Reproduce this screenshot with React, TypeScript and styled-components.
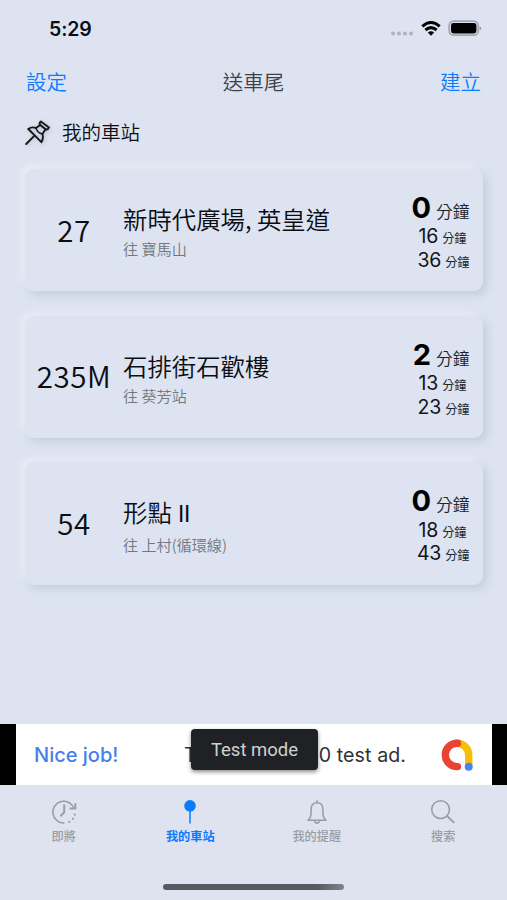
import React from 'react';
import styled, { createGlobalStyle } from 'styled-components';

const cjk = '"Noto Sans CJK TC", sans-serif';

const GlobalStyle = createGlobalStyle`
  * { box-sizing: border-box; }
  body { margin: 0; background: #dde3f0; }
`;

const Screen = styled.div`
  width: 507px;
  height: 900px;
  overflow: hidden;
  display: flex;
  flex-direction: column;
  background: #dde3f0;
  color: #0a0d14;
  font-family: Inter, ${cjk};
`;

const StatusBar = styled.header`
  height: 58px;
  flex: none;
  display: flex;
  align-items: center;
  justify-content: space-between;
  padding: 0 25px 0 49px;
`;

const Clock = styled.time`
  font-size: 19.5px;
  font-weight: 600;
  line-height: 24px;
  letter-spacing: -0.1px;
`;

const NavBar = styled.nav`
  height: 48px;
  flex: none;
  display: grid;
  grid-template-columns: 1fr auto 1fr;
  align-items: center;
  padding: 0 26px 2px;
  font-family: ${cjk};
  font-size: 20.5px;
  font-weight: 350;
  line-height: 30px;
`;

const NavAction = styled.button<{ $end?: boolean }>`
  border: 0;
  padding: 0;
  background: none;
  font: inherit;
  color: #0a7cff;
  justify-self: ${(p) => (p.$end ? 'end' : 'start')};
`;

const NavTitle = styled.h1`
  margin: 0;
  font: inherit;
  color: #3c4048;
`;

const SectionHead = styled.div`
  height: 54px;
  flex: none;
  display: flex;
  align-items: center;
  gap: 11px;
  padding-left: 23px;
  svg { filter: drop-shadow(1px 1px 2px rgba(120, 125, 135, 0.4)); }
`;

const SectionTitle = styled.h2`
  margin: 0;
  padding-bottom: 2px;
  font-family: ${cjk};
  font-size: 19.5px;
  font-weight: 350;
  line-height: 28px;
`;

const StopList = styled.main`
  flex: 1;
  display: flex;
  flex-direction: column;
  gap: 24.5px;
  padding: 9px 24px 0 25px;
`;

const StopCard = styled.article`
  height: 122.2px;
  flex: none;
  display: grid;
  grid-template-columns: 98px 1fr auto;
  border-radius: 9px;
  background: #dde3f0;
  box-shadow: 4px 4px 8px rgba(163, 172, 194, 0.4), -4px -4px 7px rgba(236, 240, 248, 0.75);
`;

const Route = styled.div`
  align-self: center;
  text-align: center;
  font-family: ${cjk};
  font-weight: 350;
  font-size: 29.5px;
  line-height: 36px;
  padding-bottom: 3px;
  letter-spacing: 0.6px;
  white-space: nowrap;
`;

const Stop = styled.div`
  padding-top: 33px;
  font-family: ${cjk};
  font-weight: 350;
  white-space: nowrap;
`;

const StopName = styled.div`
  font-size: 24.4px;
  line-height: 34px;
`;

const Latin = styled.span`
  font-family: Inter, sans-serif;
  font-weight: 400;
  font-size: 23.5px;
  letter-spacing: -0.3px;
`;

const Destination = styled.div`
  margin-top: 1.4px;
  font-size: 15.1px;
  line-height: 22px;
  color: #73777f;
`;

const Arrivals = styled.div`
  display: flex;
  flex-direction: column;
  align-items: flex-end;
  padding: 22px 13.5px 0 0;
`;

const Arrival = styled.div<{ $next?: boolean; $inset?: boolean }>`
  display: flex;
  align-items: baseline;
  gap: ${(p) => (p.$next ? '5px' : '4px')};
  height: ${(p) => (p.$next ? '34.4px' : '23.6px')};
  line-height: ${(p) => (p.$next ? '33px' : '23.6px')};
  margin-right: ${(p) => (p.$inset ? '3px' : '0')};
`;

const Minutes = styled.span<{ $next?: boolean }>`
  font-size: ${(p) => (p.$next ? '29px' : '19.5px')};
  font-weight: ${(p) => (p.$next ? 700 : 400)};
  color: ${(p) => (p.$next ? '#000' : '#10131a')};
  letter-spacing: -0.2px;
`;

const Unit = styled.span<{ $next?: boolean }>`
  font-family: ${cjk};
  font-size: ${(p) => (p.$next ? '16.8px' : '12.2px')};
  font-weight: ${(p) => (p.$next ? 350 : 400)};
  line-height: 1;
  color: #20232a;
`;

const AdStrip = styled.aside`
  position: relative;
  height: 61px;
  flex: none;
  display: flex;
  padding: 0 15px 0 16px;
  background: #000;
`;

const AdBody = styled.div`
  flex: 1;
  display: flex;
  align-items: center;
  padding: 0 18px;
  background: #fff;
  font-family: Inter, sans-serif;
  font-size: 20px;
  line-height: 26px;
  white-space: nowrap;
`;

const AdPraise = styled.span`
  width: 150px;
  color: #4580ec;
  font-weight: 500;
`;

const AdText = styled.span`
  width: 222px;
  color: #303236;
  font-size: 19.6px;
  word-spacing: -1px;
  letter-spacing: -0.22px;
`;

const AdTextEnd = styled.span`
  letter-spacing: 0.1px;
  word-spacing: 0;
`;

const AdLogo = styled.svg`
  margin-left: auto;
`;

const TestBadge = styled.div`
  position: absolute;
  left: 191px;
  top: 5px;
  width: 127px;
  height: 41px;
  border-radius: 4px;
  background: #202124;
  color: #d0d1d3;
  font-family: Roboto, sans-serif;
  font-size: 18.5px;
  line-height: 42px;
  text-align: center;
  box-shadow: 0 2px 4px rgba(0, 0, 0, 0.45);
`;

const TabBar = styled.nav`
  height: 78px;
  flex: none;
  display: grid;
  grid-template-columns: repeat(4, 126.5px);
  padding-left: 0.5px;
  background: #dfe3ef;
`;

const Tab = styled.button<{ $active?: boolean }>`
  border: 0;
  padding: 14px 0 0;
  background: none;
  display: flex;
  flex-direction: column;
  align-items: center;
  gap: 2.4px;
  color: ${(p) => (p.$active ? '#087bff' : '#999da6')};
  font-family: ${cjk};
  font-size: 12.2px;
  font-weight: ${(p) => (p.$active ? 700 : 500)};
  line-height: 18px;
`;

const HomeArea = styled.footer`
  height: 37px;
  flex: none;
  display: flex;
  justify-content: center;
  padding-top: 21px;
  background: #dfe3ef;
`;

const HomeIndicator = styled.div`
  width: 181px;
  height: 6px;
  border-radius: 3px;
  background: linear-gradient(90deg, #555b60 0 85%, #80858c);
`;

const StatusIcons = () => (
  <svg width="92" height="20" viewBox="390 19 92 20">
    <g fill="#aeb3be">
      <circle cx="393" cy="33.5" r="2" />
      <circle cx="399" cy="33.5" r="2" />
      <circle cx="405" cy="33.5" r="2" />
      <circle cx="411" cy="33.5" r="2" />
    </g>
    <g fill="none" stroke="#000" strokeWidth="3">
      <path d="M422.3 26.3 Q431 18.7 439.7 26.3" />
      <path d="M425.4 30 Q431 25.2 436.6 30" />
    </g>
    <path d="M427.8 32.6 Q431 29.8 434.2 32.6 L431 35.8Z" />
    <rect x="449.2" y="21.2" width="29" height="14" rx="4.4" fill="none" stroke="#a4a8b2" strokeWidth="1.8" />
    <rect x="451" y="23" width="25.4" height="10.4" rx="2.4" />
    <path d="M479.6 26 Q482.6 28.3 479.6 30.6Z" fill="#8f939c" />
  </svg>
);

const PushPin = () => (
  <svg width="28" height="28" viewBox="0 0 28 28" fill="none" stroke="#14171c" strokeWidth="1.9" strokeLinejoin="round" strokeLinecap="round">
    <path d="M3.2 25 11 17.2" />
    <path d="M5.3 10Q9 7.4 13 9L17.2 6Q15.8 4 17.8 2.5L26 8.4Q24.8 11.2 22.6 10.3L19.4 15Q20.8 19 18.4 23.2Z" />
    <path d="M17.2 6 22.6 10.3" />
    <path d="M13 9Q14.5 14 19.4 15" strokeWidth="1.4" />
  </svg>
);

const icons = {
  soon: (
    <>
      <path d="M23 9.4A10.9 10.9 0 1 0 13.4 24" />
      <path d="M24.3 4.2V9.4H18.6" strokeWidth="2" />
      <path d="M13.2 5.5V13.2L9.4 17.2" strokeWidth="2" />
      <g fill="currentColor" stroke="none">
        <circle cx="18.3" cy="22.9" r="1.1" />
        <circle cx="22" cy="19.8" r="1.1" />
        <circle cx="23.8" cy="15.7" r="1.1" />
      </g>
    </>
  ),
  stops: (
    <>
      <circle cx="13" cy="6.8" r="5.8" fill="currentColor" stroke="none" />
      <path d="M13 12V24.4" strokeWidth="1.5" />
    </>
  ),
  alerts: (
    <>
      <path d="M13 1.3V3.5M4.1 21.2Q7.1 18.7 7.1 13.5V10.5Q7.1 3.8 13 3.8T18.9 10.5V13.5Q18.9 18.7 21.9 21.2Z" />
      <path d="M10.2 22.2Q13 26 15.8 22.2" />
    </>
  ),
  search: (
    <>
      <circle cx="10.6" cy="10.6" r="8.9" />
      <path d="M17 17 24.3 23.9" strokeWidth="1.9" />
    </>
  ),
};

const tabs: { label: string; icon: keyof typeof icons; active?: boolean }[] = [
  { label: '即將', icon: 'soon' },
  { label: '我的車站', icon: 'stops', active: true },
  { label: '我的提醒', icon: 'alerts' },
  { label: '搜索', icon: 'search' },
];

const stops = [
  { route: '27', name: '新時代廣場, 英皇道', suffix: '', to: '寶馬山', times: [0, 16, 36] },
  { route: '235M', name: '石排街石歡樓', suffix: '', to: '葵芳站', times: [2, 13, 23] },
  { route: '54', name: '形點', suffix: 'II', to: '上村(循環線)', times: [0, 18, 43] },
];

export default function App() {
  return (
    <>
      <GlobalStyle />
      <Screen>
        <StatusBar>
          <Clock>5:29</Clock>
          <StatusIcons />
        </StatusBar>
        <NavBar>
          <NavAction>設定</NavAction>
          <NavTitle>送車尾</NavTitle>
          <NavAction $end>建立</NavAction>
        </NavBar>
        <SectionHead>
          <PushPin />
          <SectionTitle>我的車站</SectionTitle>
        </SectionHead>
        <StopList>
          {stops.map((s) => (
            <StopCard key={s.route}>
              <Route>{s.route}</Route>
              <Stop>
                <StopName>
                  {s.name}
                  {s.suffix && <Latin> {s.suffix}</Latin>}
                </StopName>
                <Destination>往 {s.to}</Destination>
              </Stop>
              <Arrivals>
                {s.times.map((t, i) => (
                  <Arrival key={t} $next={i === 0} $inset={i === 1}>
                    <Minutes $next={i === 0}>{t}</Minutes>
                    <Unit $next={i === 0}>分鐘</Unit>
                  </Arrival>
                ))}
              </Arrivals>
            </StopCard>
          ))}
        </StopList>
        <AdStrip>
          <AdBody>
            <AdPraise>Nice job!</AdPraise>
            <AdText>
              This is a 320x5<AdTextEnd>0 test ad.</AdTextEnd>
            </AdText>
            <AdLogo width="34" height="34" viewBox="0 0 34 34" fill="none" strokeWidth="7.4" strokeLinecap="round">
              <path d="M17 5.2A11.7 11.7 0 0 1 28.7 16.9V28" stroke="#fbbc04" />
              <path d="M17.5 5.2H17A11.7 11.7 0 0 0 17 28.6H17.5" stroke="#ea4335" />
              <circle cx="28.7" cy="28.7" r="4" fill="#4285f4" />
            </AdLogo>
          </AdBody>
          <TestBadge>Test mode</TestBadge>
        </AdStrip>
        <TabBar>
          {tabs.map((t) => (
            <Tab key={t.label} $active={t.active}>
              <svg width="26" height="26" viewBox="0 0 26 26" fill="none" stroke="currentColor" strokeWidth="1.6" strokeLinejoin="round">
                {icons[t.icon]}
              </svg>
              {t.label}
            </Tab>
          ))}
        </TabBar>
        <HomeArea>
          <HomeIndicator />
        </HomeArea>
      </Screen>
    </>
  );
}
